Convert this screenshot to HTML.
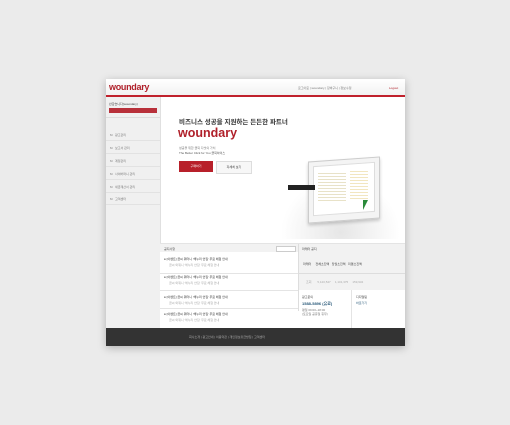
<!DOCTYPE html><html><head><meta charset="utf-8"><style>
body{margin:0;width:510px;height:425px;background:#ebebeb;font-family:"Liberation Sans","Noto Sans CJK KR",sans-serif;position:relative;overflow:hidden}
.pg{position:absolute;left:106px;top:79px;width:299px;height:267px;background:#fff;box-shadow:0 2px 8px rgba(0,0,0,.25);overflow:hidden}
.a{position:absolute}
.t{font-size:3px;color:#777;white-space:nowrap}
</style></head><body><div class="pg">
<div class="a" style="left:0;top:0;width:299px;height:16px;background:linear-gradient(#fff,#f2f2f2)"></div>
<div class="a" style="left:3px;top:3px;font-size:9px;font-weight:bold;color:#b0202a;letter-spacing:-.3px">woundary</div>
<div class="a t" style="left:192px;top:7px">로그아웃 | woundary | 장바구니 | 정보수정</div>
<div class="a t" style="left:283px;top:7px;color:#b0202a">Logout</div>
<div class="a" style="left:0;top:16px;width:299px;height:2px;background:#c0212c"></div>
<div class="a" style="left:0;top:18px;width:54px;height:231px;background:#f0f0f0;border-right:1px solid #e0e0e0"></div>
<div class="a t" style="left:3px;top:23px;color:#444">반갑습니다(woundary)</div>
<div class="a" style="left:3px;top:29px;width:48px;height:5px;background:#b8303a"></div>
<div class="a" style="left:0;top:38px;width:54px;border-top:1px solid #ddd"></div>
<div class="a t" style="left:4px;top:54px">M &nbsp; 광고관리</div>
<div class="a t" style="left:4px;top:67px">M &nbsp; 보고서 관리</div>
<div class="a t" style="left:4px;top:80px">M &nbsp; 계정관리</div>
<div class="a t" style="left:4px;top:93px">M &nbsp; 사이버머니 관리</div>
<div class="a t" style="left:4px;top:106px">M &nbsp; 세금계산서 관리</div>
<div class="a t" style="left:4px;top:118px">M &nbsp; 고객센터</div>
<div class="a" style="left:0;top:61px;width:54px;border-top:1px solid #e2e2e2"></div>
<div class="a" style="left:0;top:74px;width:54px;border-top:1px solid #e2e2e2"></div>
<div class="a" style="left:0;top:87px;width:54px;border-top:1px solid #e2e2e2"></div>
<div class="a" style="left:0;top:100px;width:54px;border-top:1px solid #e2e2e2"></div>
<div class="a" style="left:0;top:113px;width:54px;border-top:1px solid #e2e2e2"></div>
<div class="a" style="left:0;top:125px;width:54px;border-top:1px solid #e2e2e2"></div>
<div class="a" style="left:73px;top:37px;font-size:6.5px;font-weight:bold;color:#333;white-space:nowrap">비즈니스 성공을 지원하는 든든한 파트너</div>
<div class="a" style="left:72px;top:47px;font-size:12.5px;font-weight:bold;color:#b0202a">woundary</div>
<div class="a t" style="left:73px;top:67px">성공을 위한 클릭 다섯의 가치</div>
<div class="a t" style="left:73px;top:72px;color:#555">The Better Click for You 클릭하이스</div>
<div class="a" style="left:73px;top:82px;width:34px;height:11px;background:#b8202a;color:#fff;font-size:3px;text-align:center;line-height:11px">구매하기</div>
<div class="a" style="left:110px;top:82px;width:34px;height:11px;background:#f7f7f7;border:1px solid #ddd;font-size:3px;text-align:center;line-height:11px;color:#333">자세히 보기</div>
<div class="a" style="left:170px;top:95px;width:129px;height:65px;background:radial-gradient(ellipse at 50% 90%,#e6e6e6,#fff 65%)"></div>
<div class="a" style="left:202px;top:80px;width:70px;height:60px;background:#f4f4f4;border:1px solid #ccc;transform:skewY(-4deg);box-shadow:0 2px 3px rgba(0,0,0,.2)"></div>
<div class="a" style="left:207px;top:85px;width:60px;height:48px;background:#fff;border:1px solid #ddd;transform:skewY(-4deg)"></div>
<div class="a" style="left:212px;top:92px;width:28px;height:30px;background:repeating-linear-gradient(#fff 0 2px,#e8e2c8 2px 3px)"></div>
<div class="a" style="left:244px;top:90px;width:18px;height:30px;background:repeating-linear-gradient(#fff 0 2px,#f2e6c0 2px 3px)"></div>
<div class="a" style="left:182px;top:106px;width:27px;height:5px;background:#222"></div>
<div class="a" style="left:257px;top:121px;width:0;height:0;border-left:5px solid #2a8a3a;border-bottom:10px solid transparent"></div>
<div class="a" style="left:54px;top:164px;width:245px;height:85px;background:#fff;border-top:1px solid #e4e4e4"></div>
<div class="a" style="left:54px;top:165px;width:245px;height:8px;background:#f2f2f2"></div>
<div class="a" style="left:192px;top:165px;width:107px;height:67px;background:#f2f2f2;border-left:1px solid #ddd"></div>
<div class="a t" style="left:58px;top:168px;color:#444">공지사항</div>
<div class="a" style="left:170px;top:167px;width:18px;height:4px;border:1px solid #ccc;background:#fff"></div>
<div class="a t" style="left:196px;top:168px;color:#444">마케터 공지</div>
<div class="a t" style="left:197px;top:183px;color:#444">마케터 &nbsp;&nbsp;&nbsp; 전체소진액 &nbsp; 당월소진액 &nbsp; 미결소진액</div>
<div class="a t" style="left:200px;top:201px;color:#aaa">조회 &nbsp;&nbsp;&nbsp;&nbsp;&nbsp; 5,120,547 &nbsp;&nbsp;&nbsp; 1,101,375 &nbsp;&nbsp;&nbsp; 159,934</div>
<div class="a" style="left:192px;top:194px;width:107px;border-top:1px solid #ddd"></div>
<div class="a" style="left:193px;top:211px;width:106px;height:38px;background:#fff"></div>
<div class="a" style="left:245px;top:211px;height:38px;border-left:1px solid #e4e4e4"></div>
<div class="a t" style="left:196px;top:216px;color:#444">광고문의</div>
<div class="a" style="left:196px;top:222px;font-size:4px;font-weight:bold;color:#2a5a7a">1588-5896 (유료)</div>
<div class="a t" style="left:196px;top:229px">평일 09:00~18:00</div>
<div class="a t" style="left:196px;top:233px">(토요일 공휴일 휴무)</div>
<div class="a t" style="left:250px;top:216px;color:#444">디지털팀</div>
<div class="a t" style="left:250px;top:222px;color:#2a5a7a">바로가기</div>
<div class="a" style="left:54px;top:194px;width:138px;border-top:1px solid #e4e4e4"></div>
<div class="a" style="left:54px;top:211px;width:138px;border-top:1px solid #e4e4e4"></div>
<div class="a" style="left:54px;top:229px;width:138px;border-top:1px solid #e4e4e4"></div>
<div class="a t" style="left:58px;top:178px;color:#333">● [이벤트] 곰씨 워터니 '해누리 얀짐' 무료 체험 안내</div>
<div class="a t" style="left:63px;top:184px;color:#aaa">곰씨 와워니 '해누리 얀짐' 무료 체험 안내</div>
<div class="a t" style="left:58px;top:196px;color:#333">● [이벤트] 곰씨 워터니 '해누리 얀짐' 무료 체험 안내</div>
<div class="a t" style="left:63px;top:202px;color:#aaa">곰씨 와워니 '해누리 얀짐' 무료 체험 안내</div>
<div class="a t" style="left:58px;top:216px;color:#333">● [이벤트] 곰씨 워터니 '해누리 얀짐' 무료 체험 안내</div>
<div class="a t" style="left:63px;top:222px;color:#aaa">곰씨 와워니 '해누리 얀짐' 무료 체험 안내</div>
<div class="a t" style="left:58px;top:233px;color:#333">● [이벤트] 곰씨 워터니 '해누리 얀짐' 무료 체험 안내</div>
<div class="a t" style="left:63px;top:239px;color:#aaa">곰씨 와워니 '해누리 얀짐' 무료 체험 안내</div>
<div class="a" style="left:0;top:249px;width:299px;height:18px;background:#333"></div>
<div class="a t" style="left:83px;top:256px;color:#aaa">회사소개 | 광고안내 | 이용약관 | 개인정보취급방침 | 고객센터</div>
</div></body></html>
